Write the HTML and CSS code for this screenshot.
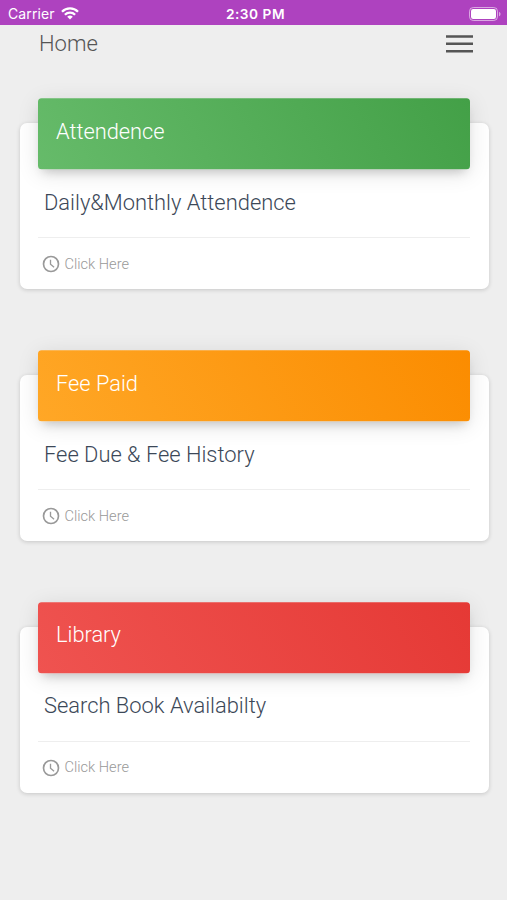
FILE: index.html
```html
<!DOCTYPE html>
<html lang="en">
<head>
<meta charset="utf-8">
<title>Home</title>
<link rel="stylesheet" href="styles.css">
</head>
<body>
<div class="status">
  <div class="carrier"><span>Carrier</span>
    <svg width="18" height="13" viewBox="0 0 18 13" fill="none" stroke="#fff" stroke-width="2.3"><path d="M1 4.7a11.3 11.3 0 0 1 16 0M3.9 7.7a7.2 7.2 0 0 1 10.2 0"/><path d="M6.2 9.8a4 4 0 0 1 5.6 0L9 12.6z" fill="#fff" stroke="none"/></svg>
  </div>
  <div class="time">2:30 PM</div>
  <svg class="battery" width="33" height="14" viewBox="0 0 33 14"><rect x=".5" y=".5" width="28" height="13" rx="3.8" fill="none" stroke="#fff" stroke-opacity=".55"/><rect x="2" y="2" width="25" height="10" rx="2.2" fill="#fff"/><path d="M30 4.7c2 .8 2 3.8 0 4.6z" fill="#fff" fill-opacity=".55"/></svg>
</div>
<header class="nav"><span class="brand">Home</span><svg class="burger" width="27" height="18" viewBox="0 0 27 18"><path d="M0 1.5h27M0 8.8h27M0 16.2h27"/></svg></header>
<main>
  <section class="card">
    <div class="head green"><h4>Attendence</h4></div>
    <h3 class="title">Daily&amp;Monthly Attendence</h3>
    <div class="foot"><svg class="clock" viewBox="0 0 24 24"><circle cx="12" cy="12" r="9"/><path d="M11.4 7v5.3l4.3 3.5"/></svg><span>Click Here</span></div>
  </section>
  <section class="card">
    <div class="head orange"><h4>Fee Paid</h4></div>
    <h3 class="title">Fee Due &amp; Fee History</h3>
    <div class="foot"><svg class="clock" viewBox="0 0 24 24"><circle cx="12" cy="12" r="9"/><path d="M11.4 7v5.3l4.3 3.5"/></svg><span>Click Here</span></div>
  </section>
  <section class="card">
    <div class="head red"><h4>Library</h4></div>
    <h3 class="title">Search Book Availabilty</h3>
    <div class="foot"><svg class="clock" viewBox="0 0 24 24"><circle cx="12" cy="12" r="9"/><path d="M11.4 7v5.3l4.3 3.5"/></svg><span>Click Here</span></div>
  </section>
</main>
</body>
</html>
```
FILE: styles.css
```css
* { box-sizing: border-box; }
body { margin: 0; height: 900px; overflow: hidden; background: #eee; font-family: Roboto, sans-serif; font-weight: 300; color: #3c4858; }
.status { height: 25px; background: #ae42bf; color: #fff; display: grid; grid-template-columns: 1fr auto 1fr; align-items: center; padding: 2px 5px 0 8px; font-family: Inter, sans-serif; font-size: 14px; font-weight: 400; }
.carrier { display: flex; align-items: center; gap: 6.5px; letter-spacing: .1px; }
.carrier svg { flex: none; }
.time { font-weight: 600; font-size: 13.7px; letter-spacing: .5px; padding-left: 1px; }
.battery { justify-self: end; }
.nav { height: 37px; display: flex; justify-content: space-between; align-items: center; padding: 0 34px 0 39px; color: #555; }
.brand { font-size: 22px; line-height: 36px; }
.burger { fill: none; stroke: #555; stroke-width: 2.6; }
main { padding: 61.4px 18px 0 19.5px; }
.card { height: 166px; margin-bottom: 85.7px; padding: 0 19px 0 18.5px; background: #fff; border-radius: 7px; box-shadow: 0 1px 4px rgba(0,0,0,.17); }
.head { height: 71px; transform: translateY(-24.7px); border-radius: 3.5px; padding: 18.6px 18px 0; color: #fff; box-shadow: 0 4px 22px rgba(0,0,0,.11), 0 7px 10px -5px rgba(0,0,0,.2); }
.green { background: linear-gradient(60deg, #66bb6a, #43a047); }
.orange { background: linear-gradient(60deg, #ffa726, #fb8c00); }
.red { background: linear-gradient(60deg, #ef5350, #e53935); }
h3, h4 { margin: 0; font-weight: 300; }
h4 { font-size: 21.8px; line-height: 30px; }
.title { margin: -7.4px 6px 0; height: 50.4px; font-size: 21.9px; line-height: 32px; }
.foot { border-top: 1px solid #eee; padding: 16px 3px 0; display: flex; align-items: center; gap: 3.5px; color: #999; font-size: 14.6px; line-height: 20px; }
.foot span { margin-top: -1px; }
.clock { width: 20px; height: 20px; fill: none; stroke: #999; stroke-width: 2; }
.clock path { stroke-width: 1.6; }
```
